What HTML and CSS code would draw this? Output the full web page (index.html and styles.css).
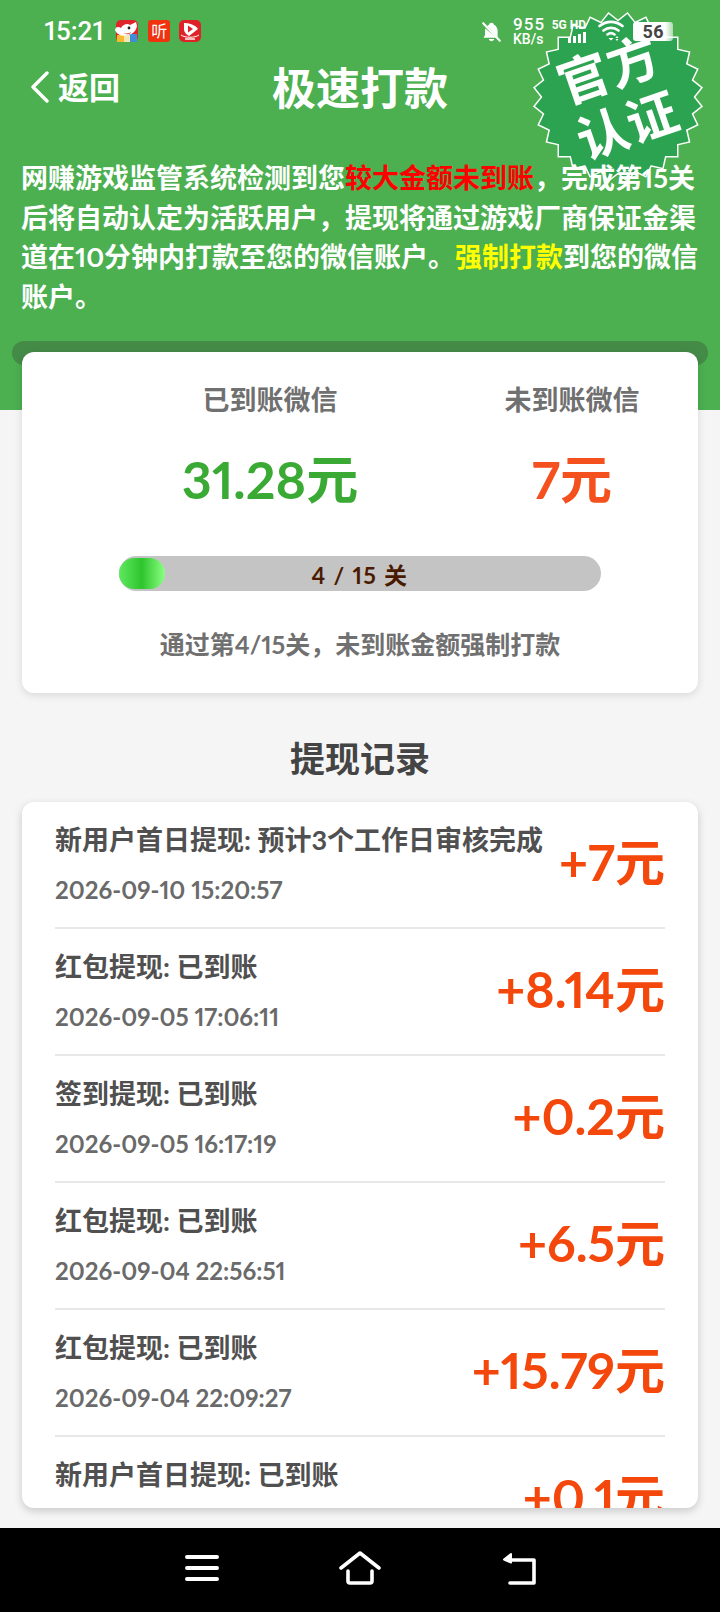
FILE: index.html
```html
<!DOCTYPE html>
<html lang="zh-CN">
<head>
<meta charset="utf-8">
<title>极速打款</title>
<link rel="stylesheet" href="styles.css">
</head>
<body>
<div class="page">
  <header class="hero">
    <div class="seal">
      <svg class="seal-star" viewBox="-90 -90 180 180" width="180" height="180">
        <defs>
          <rect id="sq" x="-59" y="-59" width="118" height="118"/>
          <g id="star">
            <use href="#sq"/>
            <use href="#sq" transform="rotate(12.857)"/>
            <use href="#sq" transform="rotate(25.714)"/>
            <use href="#sq" transform="rotate(38.571)"/>
            <use href="#sq" transform="rotate(51.429)"/>
            <use href="#sq" transform="rotate(64.286)"/>
            <use href="#sq" transform="rotate(77.143)"/>
          </g>
        </defs>
        <use href="#star" fill="#fff" stroke="#fff" stroke-width="3" stroke-linejoin="miter"/>
        <use href="#star" fill="#2ba350"/>
      </svg>
      <div class="seal-text"><span>官方</span><span>认证</span></div>
    </div>

    <div class="status">
      <div class="status-left">
        <span class="clock">15:21</span>
        <svg class="app-icon app-dog" viewBox="0 0 24 22" width="24" height="22">
          <rect x="1" width="22" height="22" rx="5" fill="#e0242a"/>
          <rect x="2" y="15" width="7" height="7" fill="#f6b92b"/>
          <rect x="9" y="15" width="6" height="7" fill="#f4e6b0"/>
          <rect x="15" y="14" width="7" height="8" fill="#3c8fd8"/>
          <path d="M0 10c1-4 4-3 6-2 2-4 7-5 9-3l6-3 1 4c-1 5-4 8-9 9-5 2-11 0-13-5z" fill="#fff"/>
          <path d="M8 12c2 2 5 2 8 0-1 3-6 3-8 0z" fill="#e0242a"/>
          <circle cx="14" cy="8" r="1.400" fill="#222"/>
        </svg>
        <span class="app-ting">听</span>
        <svg class="app-icon" viewBox="0 0 22 22" width="22" height="22">
          <rect width="22" height="22" rx="5" fill="#df2228"/>
          <path d="M5 3c0 0 5 0 8 1.500 3 1 5 3 6 4.500l-9 7c-2-1.500-5-3-5-7z" fill="#fff"/>
          <path d="M9 5.500l5 3.500-5 3.500z" fill="#df2228"/>
          <path d="M2 15c4 3 14 3 18 0" fill="none" stroke="#fff" stroke-width="1"/>
          <rect x="6" y="18" width="10" height="2" fill="#fff" opacity=".7"/>
        </svg>
      </div>
      <div class="status-right">
        <svg class="bell" viewBox="0 0 24 24" width="21" height="23">
          <path d="M12 2c-1.600 0-2.600 1-2.800 2.200-.8.300-1.600.8-2.200 1.400L19 18.500V11c0-3-2-6-4.200-6.800C14.600 3 13.600 2 12 2zM5 8.500C4.700 9.400 4.600 10.200 4.600 11v5L3 19h14.500zM9 20.500c.3 1.500 1.500 2.500 3 2.500s2.700-1 3-2.500z" fill="#fff"/>
          <path d="M2.500 2.500l19 20" stroke="#fff" stroke-width="2.400" stroke-linecap="round"/>
        </svg>
        <div class="speed"><span>955</span><span>KB/s</span></div>
        <div class="net"><span class="net-label">5G HD</span>
          <svg viewBox="0 0 18 11" width="18" height="11"><path d="M0 6h3v5H0zM5 4h3v7H5zM10 2h3v9h-3zM15 0h3v11h-3z" fill="#fff"/></svg>
        </div>
        <svg class="wifi" viewBox="0 0 26 23" width="26" height="23" fill="none" stroke="#fff" stroke-width="2.600" stroke-linecap="round">
          <path d="M1.500 6c7-5.500 16-5.500 23 0M5.500 10.500c4.500-3.500 10.500-3.500 15 0M9.500 14.500c2-1.500 5-1.500 7 0"/>
          <path d="M13 20.500l-2.500-2.500h5zM19 16l1.500 2h-3zM19 21l1.500-2h-3z" fill="#fff" stroke="none"/>
        </svg>
        <div class="battery">56</div>
      </div>
    </div>

    <div class="topbar">
      <a class="back">
        <svg viewBox="0 0 20 32" width="20" height="32" fill="none" stroke="#fff" stroke-width="3.400" stroke-linecap="round" stroke-linejoin="round"><path d="M17 2L3 16l14 14"/></svg>
        <span>返回</span>
      </a>
      <h1 class="title">极速打款</h1>
    </div>

    <p class="notice">网赚游戏监管系统检测到您<b class="red">较大金额未到账</b>&#65292;完成第15关后将自动认定为活跃用户&#65292;提现将通过游戏厂商保证金渠道在10分钟内打款至您的微信账户。<b class="yellow">强制打款</b>到您的微信账户。</p>
    <div class="slot"></div>
  </header>

  <section class="summary">
    <div class="totals">
      <div class="total"><div class="total-label">已到账微信</div><div class="total-value green">31.28元</div></div>
      <div class="total"><div class="total-label">未到账微信</div><div class="total-value orange">7元</div></div>
    </div>
    <div class="progress">
      <div class="progress-fill"></div>
      <span class="progress-text">4 / 15 关</span>
    </div>
    <p class="progress-note">通过第4/15关&#65292;未到账金额强制打款</p>
  </section>

  <h2 class="records-title">提现记录</h2>

  <section class="records">
    <div class="row"><div class="row-info"><div class="row-title">新用户首日提现: 预计3个工作日审核完成</div><div class="row-date">2026-09-10 15:20:57</div></div><div class="row-amount">+7元</div></div>
    <div class="row"><div class="row-info"><div class="row-title">红包提现: 已到账</div><div class="row-date">2026-09-05 17:06:11</div></div><div class="row-amount">+8.14元</div></div>
    <div class="row"><div class="row-info"><div class="row-title">签到提现: 已到账</div><div class="row-date">2026-09-05 16:17:19</div></div><div class="row-amount">+0.2元</div></div>
    <div class="row"><div class="row-info"><div class="row-title">红包提现: 已到账</div><div class="row-date">2026-09-04 22:56:51</div></div><div class="row-amount">+6.5元</div></div>
    <div class="row"><div class="row-info"><div class="row-title">红包提现: 已到账</div><div class="row-date">2026-09-04 22:09:27</div></div><div class="row-amount">+15.79元</div></div>
    <div class="row"><div class="row-info"><div class="row-title">新用户首日提现: 已到账</div><div class="row-date">&nbsp;</div></div><div class="row-amount">+0.1元</div></div>
  </section>

  <nav class="navbar">
    <svg viewBox="0 0 34 28" width="34" height="28" fill="none" stroke="#fff" stroke-width="4" stroke-linecap="round"><path d="M2 3h30M2 14h30M2 25h30"/></svg>
    <svg viewBox="0 0 44 34" width="44" height="34" fill="none" stroke="#fff" stroke-width="3.600" stroke-linecap="round" stroke-linejoin="round"><path d="M3 17L22 2l19 15"/><path d="M10 20v10c0 1.500 1 2 2 2h20c1 0 2-.5 2-2V20"/></svg>
    <svg viewBox="0 0 38 34" width="38" height="34" fill="none" stroke="#fff" stroke-width="3.600" stroke-linecap="round" stroke-linejoin="round"><path d="M8 9h25v23H9"/><path d="M10 3L3 8.500l7 3z" fill="#fff" stroke-width="2"/></svg>
  </nav>
</div>
</body>
</html>
```
FILE: styles.css
```css
* { box-sizing: border-box; }
html, body { margin: 0; padding: 0; }
body {
  background: #f5f5f5;
  font-family: "Lato", "Noto Sans CJK SC", sans-serif;
  font-variant-numeric: proportional-nums;
  color: #444;
}
.page { width: 720px; height: 1612px; overflow: hidden; display: flex; flex-direction: column; }

.hero { position: relative; height: 410px; background: #4caf50; color: #fff; flex: none; }

.seal { position: absolute; left: 528px; top: 7px; width: 180px; height: 180px; z-index: 1; }
.seal-star { display: block; }
.seal-text {
  position: absolute; inset: 0;
  display: flex; flex-direction: column; align-items: center; justify-content: center;
  font-size: 51px; line-height: 59px; font-weight: 700; letter-spacing: 1px;
  transform: rotate(-19deg);
}
.seal-text span { display: block; }

.status { position: relative; z-index: 2; height: 62px; padding: 0 44px; display: flex; justify-content: space-between; align-items: center; }
.status-left { display: flex; align-items: center; gap: 9px; }
.clock { font-family: "Roboto", sans-serif; font-weight: 500; font-size: 26px; margin-right: 2px; }
.app-icon { display: block; }
.app-ting { width: 22px; height: 22px; background: #f0320f; border-radius: 3px; font-size: 16px; line-height: 22px; text-align: center; color: #fff; }
.status-right { display: flex; align-items: center; margin-right: 3px; }
.bell { display: block; margin-right: 11px; }
.speed { display: flex; flex-direction: column; font-family: "Roboto", sans-serif; font-weight: 500; width: 41px; }
.speed span:first-child { font-size: 17px; line-height: 16px; letter-spacing: 1px; }
.speed span:last-child { font-size: 14px; line-height: 14px; }
.net { width: 32px; display: flex; flex-direction: column; align-items: flex-end; font-family: "Roboto", sans-serif; font-weight: 700; margin-right: 12px; }
.net-label { font-size: 12px; line-height: 13px; white-space: nowrap; }
.wifi { display: block; margin-right: 9px; }
.battery { width: 40px; height: 19px; border-radius: 3px; background: linear-gradient(90deg, #fff 80%, rgba(255,255,255,.55) 100%); color: #444; font-family: "Roboto", sans-serif; font-weight: 700; font-size: 18px; line-height: 19px; text-align: center; }

.topbar { position: relative; height: 52px; display: flex; align-items: center; justify-content: center; }
.back { position: absolute; left: 30px; top: 7px; display: flex; align-items: center; gap: 8px; font-size: 31px; font-weight: 700; line-height: 36px; }
.back svg { display: block; }
.title { margin: 0; font-size: 44px; font-weight: 700; line-height: 52px; }

.notice { position: relative; z-index: 2; margin: 44px 0 0; padding: 0 20px 0 21px; font-size: 27px; line-height: 39.500px; font-weight: 700; word-break: break-all; }
.notice b { font-weight: 700; }
.red { color: #f00; }
.yellow { color: #ff0; }
.slot { margin: 25px 12px 0; height: 24px; border-radius: 12px; background: #458b48; }

.summary { position: relative; flex: none; margin: -58px 22px 0; height: 341px; padding-top: 30px; background: #fff; border-radius: 12px; box-shadow: 0 2px 8px rgba(0,0,0,.12); }
.totals { display: grid; grid-template-columns: 200px 200px; column-gap: 102px; padding-left: 148px; }
.total { text-align: center; white-space: nowrap; }
.total-label { font-size: 27px; line-height: 36px; font-weight: 700; color: #707070; }
.total-value { margin-top: 31px; font-size: 52px; line-height: 60px; font-weight: 700; }
.green { color: #3aaa35; }
.orange { color: #f4511e; }

.progress { position: relative; margin: 47px 97px 0; height: 35px; border-radius: 18px; background: #c4c4c4; display: flex; align-items: center; justify-content: center; }
.progress-fill { position: absolute; left: 0; top: 2px; bottom: 2px; width: 46px; border-radius: 16px; background: linear-gradient(90deg, #5fe85f 0%, #2ec52e 50%, #8bff82 100%); }
.progress-text { position: relative; font-size: 23px; font-weight: 700; color: #4a1a00; letter-spacing: 1.300px; }
.progress-note { margin: 35px 0 0; text-align: center; font-size: 25px; line-height: 36px; font-weight: 700; color: #707070; }

.records-title { margin: 41px 0 0; flex: none; text-align: center; font-size: 35px; line-height: 48px; font-weight: 700; color: #444; }

.records { flex: none; margin: 20px 22px 0; height: 706px; padding: 0 33px; background: #fff; border-radius: 12px; overflow: hidden; box-shadow: 0 3px 8px rgba(0,0,0,.18); }
.row { display: flex; justify-content: space-between; align-items: center; height: 127px; padding: 20px 0 20px; border-bottom: 2px solid #e8e8e8; }
.row-title { font-size: 27px; line-height: 36px; font-weight: 700; color: #505050; white-space: nowrap; }
.row-date { margin-top: 15px; font-size: 24px; line-height: 34px; font-weight: 700; color: #6a6a6a; white-space: nowrap; }
.row-amount { margin-bottom: 6px; font-size: 50px; line-height: 60px; font-weight: 700; color: #f4470c; white-space: nowrap; }

.navbar { flex: none; margin-top: 20px; height: 84px; background: #000; display: flex; align-items: center; justify-content: center; gap: 119px; padding: 0 0 4px 4px; }
.navbar svg { display: block; }
```
